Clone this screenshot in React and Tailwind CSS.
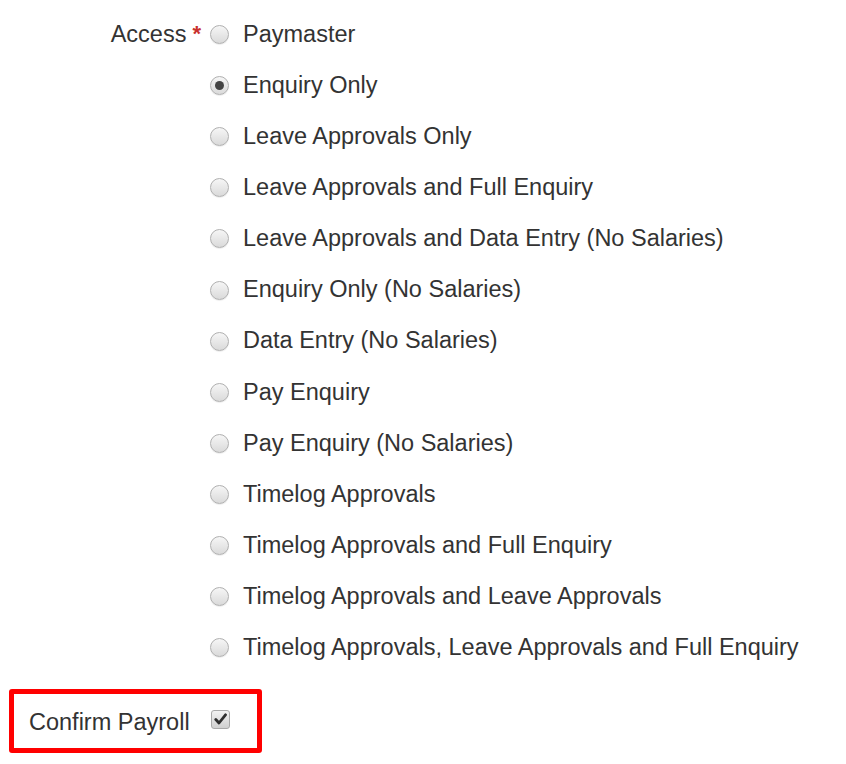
const options = [
  "Paymaster",
  "Enquiry Only",
  "Leave Approvals Only",
  "Leave Approvals and Full Enquiry",
  "Leave Approvals and Data Entry (No Salaries)",
  "Enquiry Only (No Salaries)",
  "Data Entry (No Salaries)",
  "Pay Enquiry",
  "Pay Enquiry (No Salaries)",
  "Timelog Approvals",
  "Timelog Approvals and Full Enquiry",
  "Timelog Approvals and Leave Approvals",
  "Timelog Approvals, Leave Approvals and Full Enquiry",
];

function Radio({ checked }) {
  return (
    <span className="w-[19px] h-[19px] rounded-full border border-[#b0b0b0] bg-gradient-to-b from-[#f6f6f6] to-[#dadada] flex items-center justify-center shadow-[0_1px_1px_rgba(0,0,0,0.08)]">
      {checked && <span className="w-[9px] h-[9px] rounded-full bg-[#444]" />}
    </span>
  );
}

export default function App() {
  return (
    <div className="w-[846px] h-[764px] bg-white text-[#333] font-['Liberation_Sans',Arial,sans-serif] text-[23.5px] relative">
      <div className="pt-[9px]">
        {options.map((opt, i) => (
          <div key={opt} className="flex items-center h-[51.1px]">
            <div className="w-[210px] flex justify-end pr-[9px]">
              {i === 0 && (
                <span className="flex items-center">
                  Access
                  <span className="text-[#c9302c] ml-[6px] text-[22px] font-bold leading-none mt-[-2px]">*</span>
                </span>
              )}
            </div>
            <Radio checked={i === 1} />
            <span className="ml-[14px]">{opt}</span>
          </div>
        ))}
      </div>
      <div className="ml-[9px] mt-[16px] w-[253px] h-[64px] border-[5px] border-[#ff0000] rounded-[3px] flex items-center pl-[15px]">
        <span className="mt-[2px]">Confirm Payroll</span>
        <span className="ml-[21px] mt-[-4px] w-[19px] h-[19px] rounded-[3px] border border-[#a9a9a9] bg-gradient-to-b from-[#f2f2f2] to-[#d0d0d0] flex items-center justify-center">
          <svg width="13" height="12" viewBox="0 0 13 12">
            <path d="M1.8 6.5 L5 10 L11.5 1.8" fill="none" stroke="#2e2e2e" strokeWidth="2.8" strokeLinejoin="round" strokeLinecap="round" />
          </svg>
        </span>
      </div>
    </div>
  );
}
